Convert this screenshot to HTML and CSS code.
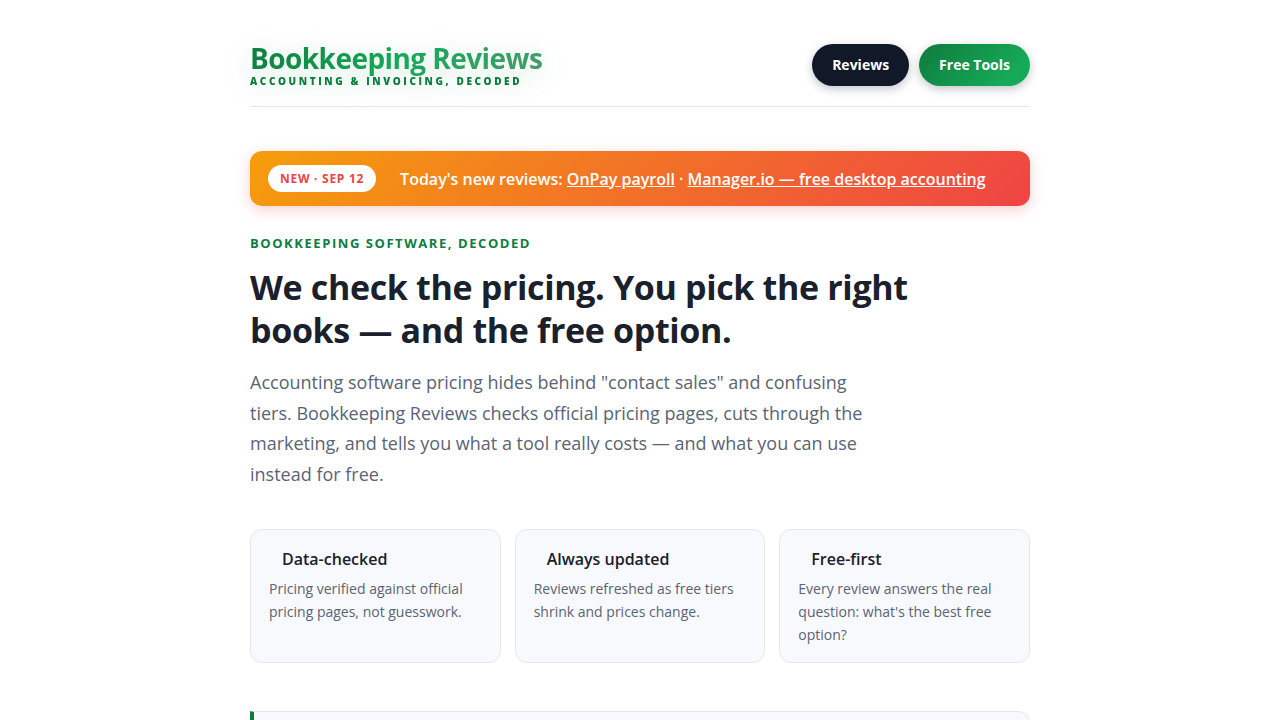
FILE: index.html
```html
<!DOCTYPE html>
<html lang="en">
<head>
    <meta charset="UTF-8">
    <meta name="viewport" content="width=device-width, initial-scale=1.0">
    <title>Bookkeeping Reviews</title>
    <link rel="stylesheet" href="styles.css">
</head>
<body>
    <div class="wrap">
        <header class="site-header">
            <a class="logo" href="#">
                <span class="logo-name">Bookkeeping Reviews</span>
                <span class="logo-tag">Accounting &amp; Invoicing, Decoded</span>
            </a>
            <nav class="nav">
                <a class="nav-btn" href="#reviews">Reviews</a>
                <a class="nav-btn nav-btn-green" href="#tools">Free Tools</a>
            </nav>
        </header>

        <main>
            <div class="banner">
                <span class="pill">NEW · SEP 12</span>
                <p class="banner-text">Today's new reviews: <a href="#onpay">OnPay payroll</a> · <a href="#manager">Manager.io — free desktop accounting</a></p>
            </div>

            <section class="hero">
                <p class="eyebrow">Bookkeeping software, decoded</p>
                <h1>We check the pricing. You pick the right books — and the free option.</h1>
                <p class="lead">Accounting software pricing hides behind "contact sales" and confusing tiers. Bookkeeping Reviews checks official pricing pages, cuts through the marketing, and tells you what a tool really costs — and what you can use instead for free.</p>
            </section>

            <section class="cards">
                <div class="card">
                    <h2>Data-checked</h2>
                    <p>Pricing verified against official pricing pages, not guesswork.</p>
                </div>
                <div class="card">
                    <h2>Always updated</h2>
                    <p>Reviews refreshed as free tiers shrink and prices change.</p>
                </div>
                <div class="card">
                    <h2>Free-first</h2>
                    <p>Every review answers the real question: what's the best free option?</p>
                </div>
            </section>

            <section class="callout"></section>
        </main>
    </div>
</body>
</html>
```
FILE: styles.css
```css
* {
    margin: 0;
    padding: 0;
    box-sizing: border-box;
}

body {
    font-family: 'Open Sans', 'Noto Sans', sans-serif;
    font-size: 16px;
    line-height: 1.7;
    color: #1a202c;
    background: #fff;
}

.wrap {
    max-width: 820px;
    margin: 0 auto;
    padding: 44px 20px 0;
}

.site-header {
    display: flex;
    justify-content: space-between;
    align-items: center;
    padding-bottom: 20px;
    margin-bottom: 44px;
    border-bottom: 1px solid #e5e7eb;
}

.logo {
    display: flex;
    flex-direction: column;
    text-decoration: none;
    filter: drop-shadow(0 4px 12px rgba(10, 126, 62, 0.18));
}

/* extra bottom padding keeps the descenders inside the clipped gradient */
.logo-name {
    padding-bottom: 6px;
    margin-bottom: -2px;
    font-size: 28px;
    font-weight: 700;
    line-height: 29px;
    letter-spacing: -0.02em;
    background: linear-gradient(135deg, #0a7e3e 0%, #16a957 50%, #4a9a6e 100%);
    -webkit-background-clip: text;
    background-clip: text;
    color: transparent;
}

.logo-tag {
    font-size: 10px;
    font-weight: 800;
    line-height: 9px;
    letter-spacing: 0.26em;
    text-transform: uppercase;
    color: #0a7e3e;
}

.nav {
    display: flex;
    gap: 10px;
}

.nav-btn {
    padding: 9px 20px;
    border-radius: 999px;
    font-size: 14px;
    font-weight: 700;
    line-height: 24px;
    color: #fff;
    text-decoration: none;
    background: #111827;
    box-shadow: 0 3px 10px rgba(17, 24, 39, 0.25);
}

.nav-btn-green {
    background: linear-gradient(135deg, #0f7a3d, #16a957 80%);
}

.banner {
    display: flex;
    align-items: center;
    gap: 24px;
    padding: 14px 18px;
    margin-bottom: 26px;
    border-radius: 12px;
    color: #fff;
    background: linear-gradient(135deg, #f59e0b, #ef4444);
    box-shadow: 0 4px 14px rgba(239, 68, 68, 0.25);
}

.pill {
    padding: 3px 12px;
    border-radius: 999px;
    font-size: 12px;
    font-weight: 700;
    line-height: 21px;
    letter-spacing: 0.06em;
    white-space: nowrap;
    color: #ef4444;
    background: #fff;
}

.banner-text {
    font-size: 16px;
    font-weight: 600;
    line-height: 26px;
}

.banner-text a {
    color: #fff;
}

.eyebrow {
    font-size: 13px;
    font-weight: 700;
    line-height: 22px;
    letter-spacing: 0.12em;
    text-transform: uppercase;
    color: #0a7e3e;
    margin-bottom: 12px;
}

h1 {
    max-width: 720px;
    font-size: 34px;
    font-weight: 700;
    line-height: 43px;
    letter-spacing: -0.01em;
    margin-bottom: 15px;
}

.lead {
    max-width: 640px;
    font-size: 18px;
    color: #5a6474;
}

.cards {
    display: grid;
    grid-template-columns: repeat(3, 1fr);
    gap: 14px;
    margin: 40px 0 48px;
}

.card {
    padding: 16px 18px;
    border: 1px solid #e5e7eb;
    border-radius: 12px;
    background: #f8f9fd;
}

.card h2 {
    padding-left: 13px;
    font-size: 16px;
    font-weight: 600;
    line-height: 26px;
    margin-bottom: 5px;
}

.card p {
    font-size: 14px;
    line-height: 23px;
    color: #5a6474;
}

.callout {
    min-height: 160px;
    border: 1px solid #e5e7eb;
    border-left: 4px solid #0a7e3e;
    border-radius: 0 12px 12px 0;
    background: #f8f9fd;
}
```
